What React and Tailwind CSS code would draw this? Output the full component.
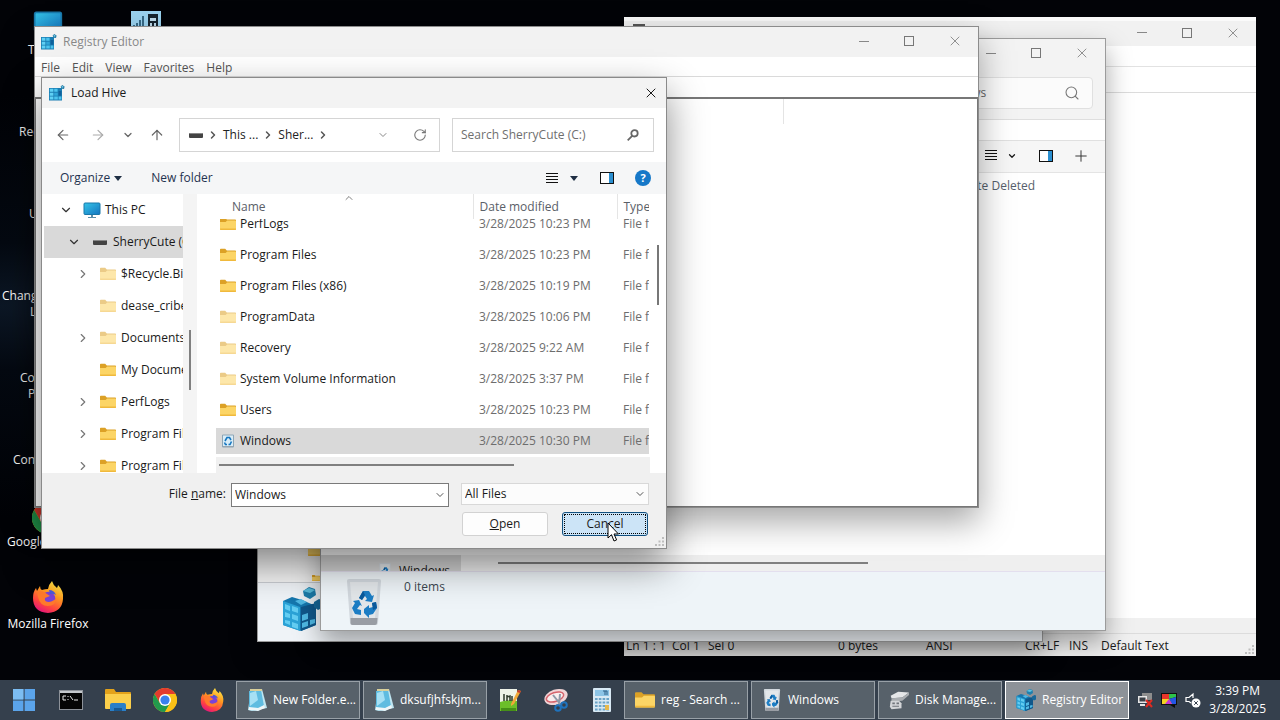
import React from 'react';
import clsx from 'clsx';
import { ArrowLeft, ArrowRight, ArrowUp, ChevronDown, ChevronRight, ChevronUp, Plus, RotateCw, Search, X } from 'lucide-react';

/* ---------- icons ---------- */

function FolderIcon({ className = 'w-4 h-4', faded }) {
  return (
    <svg viewBox="0 0 16 16" className={clsx('shrink-0', className, faded && 'opacity-55')}>
      <path d="M0 2.6q0-.8.8-.8h4.4l1.6 1.6h8.4q.8 0 .8.8V8H0z" fill="#dca126" />
      <path d="M0 6h5.6l1.5-1.4h8.1q.8 0 .8.8v7.8q0 .8-.8.8H.8q-.8 0-.8-.8z" fill="#fcd566" />
      <path d="M0 12.6h16v.6q0 .8-.8.8H.8q-.8 0-.8-.8z" fill="#f0b93c" />
    </svg>
  );
}

function RegistryIcon({ className = 'w-4 h-4' }) {
  return (
    <svg viewBox="0 0 16 16" className={clsx('shrink-0', className)}>
      <path d="M0 3h13v12.500H0z" fill="#1a7db3" />
      <path d="M.8 3.800h3.600v3H.8zM.8 7.700h3.600v3H.8zM.8 11.600h3.600v3H.8z" fill="#5fd0f4" />
      <path d="M5.200 3.800h3.400v3H5.200zM5.200 11.600h3.600v3H5.200zM9.600 11.600h2.800v3H9.600z" fill="#4cc4ee" />
      <path d="M5.200 7.700h3.600v3H5.200z" fill="#2fa5d8" />
      <path d="M9.600 6h2.800v4.700H9.600z" fill="#10609a" />
      <path d="M13.300 0l2.300 1.400-.6 2.500-2.500-.1-.9-2.300z" fill="#2c7fa8" />
      <path d="M13.400 1l1.200.8-1.200.9-1-.9z" fill="#7fd6f2" />
    </svg>
  );
}

function RegistryCube({ className }) {
  return (
    <svg viewBox="0 0 40 44" className={clsx('shrink-0', className)}>
      <path d="M1 14l9-4 10 3 14 6v19l-15 6-18-6z" fill="#1677ae" />
      <path d="M1 14l17 6v24L1 38z" fill="#2ba2d6" />
      <path d="M19 20l15-4v22l-15 6z" fill="#10578a" />
      <path d="M3 17l5 2v5l-5-2zM10 19l6 2v5l-6-2zM3 25l5 2v4l-5-1zM10 27l6 2v5l-6-2zM3 33l5 1v4l-5-2zM10 35l6 2v5l-6-2z" fill="#63cdf2" />
      <path d="M20 28l6-2v6l-6 2zM20 36l6-2v5l-6 2zM28 33l5-1v4l-5 2zM13 14l6-2 6 3-6 3z" fill="#4fb9e4" />
      <path d="M21 4l6-4 6 2 1 6-6 4-6-3z" fill="#1d7fae" />
      <path d="M21 4l6-3 6 2-5 3z" fill="#5bc0e0" />
      <path d="M32 15l5-3 3 1v8l-4 2-4-3z" fill="#17689a" />
    </svg>
  );
}

function RecycleIcon({ className = 'w-4 h-4' }) {
  return (
    <svg viewBox="0 0 36 46" className={clsx('shrink-0', className)}>
      <path d="M1 2q0-2 2-2h30q2 0 2 2l-3 42q0 2-2 2H6q-2 0-2-2z" fill="#d2d8de" />
      <path d="M4 3h28l-3 36H7z" fill="#e3e7ea" />
      <path d="M4.500 39h27l-.5 5q0 2-2 2H6.500q-2 0-2-2z" fill="#999da4" />
      <g fill="#1c7dc4">
        <path d="M13 19l4-7h6l3 5 2-1-2 7-7-1 2-2-2-3-3 4z" />
        <path d="M7 22l6-1 3 6-2-1-3 4 4 1v5l-6-1-3-6 3-5z" />
        <path d="M18 30l5-4v3l4-1-1-4 4-1 1 6-4 6-4 1v3l-5-5z" />
      </g>
      <path d="M17 12l-4 7 3 2 3-5zM26 24l4-1 1 6-4 2z" fill="#0c5a9c" />
    </svg>
  );
}

// Simplified bin for the 16px list size
function SmallRecycleIcon() {
  return (
    <svg viewBox="0 0 16 16" className="h-4 w-4 shrink-0">
      <path d="M2.500 2h11v12h-11z" fill="#d9edf8" stroke="#8ea6b6" />
      <path d="M5 8l2-3.500h2.500L11 7M11.500 8.500L10 11.500H8.500M7 11.500H5.500L4.500 9.500" fill="none" stroke="#1676bf" strokeWidth="1.600" />
      <path d="M3 13h10v1H3z" fill="#9aa5ae" />
    </svg>
  );
}

function MonitorIcon({ className }) {
  return (
    <svg viewBox="0 0 18 16" className={clsx('shrink-0', className)}>
      <defs>
        <linearGradient id="screen" x1="0" y1="0" x2="1" y2="1">
          <stop offset="0" stopColor="#35c4e8" />
          <stop offset="1" stopColor="#1475c0" />
        </linearGradient>
      </defs>
      <rect x="1" y="1" width="16" height="11.500" rx="1" fill="url(#screen)" stroke="#1978aa" />
      <path d="M8 13h2v2h3v1H5v-1h3z" fill="#5b8ea8" />
    </svg>
  );
}

function DriveIcon() {
  return (
    <svg viewBox="0 0 14 5" className="w-3.5 h-[5px] shrink-0">
      <rect width="14" height="5" rx="1" fill="#444" />
      <rect y="0" width="14" height="1" rx="1" fill="#888" />
    </svg>
  );
}

function FirefoxIcon({ className }) {
  return (
    <svg viewBox="0 0 32 32" className={clsx('shrink-0', className)}>
      <defs>
        <linearGradient id="fox" x1=".8" y1="0" x2=".3" y2="1">
          <stop offset="0" stopColor="#fff04a" />
          <stop offset=".4" stopColor="#ff9a20" />
          <stop offset=".75" stopColor="#ff4440" />
          <stop offset="1" stopColor="#e3147c" />
        </linearGradient>
      </defs>
      <path d="M20 0q1 4 5 7 1-2 1-3 6 6 5 14-1 13-15 14Q1 31 1 17q0-6 3-10l1 3 3-5q0 3 2 4 3-1 6-1 1-5 4-8z" fill="url(#fox)" />
      <circle cx="16.500" cy="17.500" r="6.800" fill="#7a42d8" />
      <path d="M5 11q6-2 10 2l3 2-5 2q-1 4 4 4 5-1 7-4 0 8-8 8T6 16z" fill="#ff7a2c" />
      <path d="M17 9q5 0 7 5-3-2-6-1z" fill="#4a59d8" />
    </svg>
  );
}

function ChromeIcon({ className }) {
  return (
    <svg viewBox="0 0 24 24" className={clsx('shrink-0', className)}>
      <circle cx="12" cy="12" r="12" fill="#fbc116" />
      <path d="M1.600 6A12 12 0 0122.400 6H12L6.800 15z" fill="#e33b2e" />
      <path d="M1.600 6A12 12 0 0012 24l5.200-9-10.400 0z" fill="#229a4d" />
      <path d="M22.400 6A12 12 0 0112 24l5.200-9L12 6z" fill="#fbc116" />
      <circle cx="12" cy="12" r="6" fill="#fff" />
      <circle cx="12" cy="12" r="4.600" fill="#3a80ee" />
    </svg>
  );
}

function StartIcon() {
  return (
    <svg viewBox="0 0 22 22" className="w-[22px] h-[22px]">
      <path d="M0 0h10.400v10.400H0zM11.600 0H22v10.400H11.600zM0 11.600h10.400V22H0zM11.600 11.600H22V22H11.600z" fill="#5ba4ea" />
      <path d="M0 0h10.400v10.400H0z" fill="#7cbdf2" />
    </svg>
  );
}

function CmdIcon() {
  return (
    <svg viewBox="0 0 24 20" className="w-6 h-5">
      <rect x=".5" y=".5" width="23" height="19" fill="#050505" stroke="#8d9299" />
      <path d="M1 1h22v2H1z" fill="#c4c8cc" />
      <path d="M7 6H4v4h3M9 6v1M9 9v1M11 6l3 4M15 10h4" stroke="#e8e8e8" fill="none" />
    </svg>
  );
}

function ExplorerIcon() {
  return (
    <svg viewBox="0 0 26 24" className="w-[26px] h-6">
      <path d="M0 2q0-1 1-1h8l2 3h14q1 0 1 1v3H0z" fill="#e3a21a" />
      <path d="M0 6h26v14q0 1-1 1H1q-1 0-1-1z" fill="#fbcf4b" />
      <path d="M5 23v-6q0-2 2-2h12q2 0 2 2v6h-4v-3H9v3z" fill="#2a7fc8" />
      <path d="M9 20h8v3H9z" fill="#185a94" />
    </svg>
  );
}

function NotepadIcon() {
  return (
    <svg viewBox="0 0 20 24" className="w-5 h-6 shrink-0">
      <path d="M4 2l11-1 5 19-15 3-4-1z" fill="#bfe6f2" />
      <path d="M2 3l12-1 3 16-6 5-9-1z" fill="#5fbce0" />
      <path d="M3 5l6-2 2 9-8 6z" fill="#a6e0f4" />
      <path d="M2 19l9 1 6-3 1 3-7 3-9-1z" fill="#eef6f8" />
      <path d="M3 2h12" stroke="#d9cf9a" strokeWidth="2" />
    </svg>
  );
}

function NotepadPlusIcon() {
  return (
    <svg viewBox="0 0 22 24" className="w-[22px] h-6">
      <path d="M1 1h17v22H1z" fill="#eef3e8" />
      <path d="M1 14q9-3 17-1v10H1z" fill="#6cbf2a" />
      <path d="M2 20h15v3H2z" fill="#468f18" />
      <path d="M5 6v7M8 7v6M8 9l3-1v5M13 8v5" stroke="#2e3a2a" strokeWidth="1.500" fill="none" />
      <path d="M12 16l7-14 3 1-7 13-3 2z" fill="#f0a838" />
      <path d="M19 2l3 1-1 2-3-1z" fill="#c33b2b" />
    </svg>
  );
}

function SnippingIcon() {
  return (
    <svg viewBox="0 0 24 24" className="w-6 h-6">
      <ellipse cx="12" cy="9" rx="12" ry="7.500" transform="rotate(-18 12 9)" fill="#f0d4d6" />
      <ellipse cx="11" cy="9" rx="9" ry="4.500" transform="rotate(-18 11 9)" fill="#f8eeee" stroke="#d5636c" strokeWidth="1.500" />
      <path d="M9 7l8 10M16 6l-1 11" stroke="#8e99a8" strokeWidth="2" />
      <circle cx="14" cy="20" r="2.800" fill="none" stroke="#1f72bc" strokeWidth="2" />
      <circle cx="20" cy="17" r="2.800" fill="none" stroke="#1f72bc" strokeWidth="2" />
    </svg>
  );
}

function CalculatorIcon() {
  return (
    <svg viewBox="0 0 18 24" className="w-[18px] h-6">
      <rect width="18" height="24" rx="1" fill="#d8e9f4" />
      <rect x="2" y="2" width="14" height="6" fill="#8cc4e6" />
      <path d="M10 3h4v4M12 3v4" stroke="#2c5f86" fill="none" />
      <path d="M2 11h14M2 14.500h14M2 18h14M2 21.500h14" stroke="#6ba4c8" strokeWidth="2" strokeDasharray="2.600 1.200" />
      <path d="M12 17h4v5h-4z" fill="#e6b84c" />
    </svg>
  );
}

function DiskIcon() {
  return (
    <svg viewBox="0 0 24 22" className="w-5 h-5 shrink-0">
      <path d="M2 6l9-5 13 1-8 6-13 1z" fill="#e4e6e8" />
      <path d="M3 9l13-1 8-6v3l-8 7-13 1z" fill="#a9adb1" />
      <path d="M2 12h10l3 3v6l-12 1-2-3z" fill="#d3d5d8" />
      <path d="M4 14h3v2H4zM9 14h3v2H9zM4 18h8v1H4z" fill="#70757b" />
    </svg>
  );
}

function PaneIcon() {
  return (
    <svg viewBox="0 0 14 12" className="w-3.5 h-3">
      <path d="M0 0h14v12H0z" fill="#111" />
      <path d="M1 1h8v10H1z" fill="#fff" />
      <path d="M9 1h4v10H9z" fill="#2b8fd0" />
    </svg>
  );
}

function ListIcon() {
  return (
    <svg viewBox="0 0 12 11" className="w-3 h-[11px]">
      <path d="M0 .5h12M0 3.500h12M0 6.500h12M0 9.500h12" stroke="#111" shapeRendering="crispEdges" />
    </svg>
  );
}

function SmallSearchIcon() {
  return (
    <svg viewBox="0 0 12 12" className="h-3 w-3" fill="none" stroke="#666" strokeWidth="1.800">
      <circle cx="7.500" cy="4.300" r="3.200" />
      <path d="M5.200 6.800L.7 11.300" />
    </svg>
  );
}

function Caret() {
  return (
    <svg viewBox="0 0 8 5" className="w-2 h-[5px]">
      <path d="M0 0h8L4 5z" fill="#1f2f44" />
    </svg>
  );
}

function Grip({ className }) {
  return (
    <svg viewBox="0 0 9 9" className={clsx('w-[9px] h-[9px]', className)}>
      <path d="M7 0h2v2H7zM7 3.500h2v2H7zM3.500 3.500h2v2h-2zM7 7h2v2H7zM3.500 7h2v2h-2zM0 7h2v2H0z" fill="#bdbdbd" />
    </svg>
  );
}

/* ---------- window chrome ---------- */

function WindowControls() {
  return (
    <div className="ml-auto flex pb-0.5 text-[#777]">
      <button aria-label="Minimize" className="flex w-[46px] items-center justify-center">
        <span className="h-px w-2.5 bg-[#888]" />
      </button>
      <button aria-label="Maximize" className="flex w-11 items-center justify-center">
        <span className="h-2.5 w-2.5 border border-[#777]" />
      </button>
      <button aria-label="Close" className="flex w-[47px] items-center justify-center">
        <X className="h-4 w-4" strokeWidth={1.2} />
      </button>
    </div>
  );
}

/* ---------- background windows ---------- */

function EditorWindow() {
  return (
    <section className="absolute left-[624px] top-[17px] flex h-[639px] w-[632px] flex-col bg-white">
      <header className="flex h-[29px] shrink-0 border-t-4 border-[#fafafa] bg-[#f1f1f1]">
        <span className="ml-[9px] mt-[3px] h-1 w-3 bg-[#555]" />
        <WindowControls />
      </header>
      <div className="h-[21px] shrink-0 border-b border-[#e2e2e2]" />
      <div className="h-[26px] shrink-0 border-b border-[#dcdcdc]" />
      <div className="flex-1" />
      <div className="h-4 shrink-0 border-b border-[#dcdcdc] bg-[#f0f0f0]" />
      <footer className="flex h-[22px] shrink-0 items-center bg-[#f0f0f0] pl-0.5 pt-0.5 text-[#1a1a1a]">
        <span className="w-[46px]">Ln 1 : 1</span>
        <span className="w-9">Col 1</span>
        <span className="w-[130px]">Sel 0</span>
        <span className="w-[88px]">0 bytes</span>
        <span className="w-[99px]">ANSI</span>
        <span className="w-11">CR+LF</span>
        <span className="w-8">INS</span>
        <span>Default Text</span>
        <Grip className="mb-0.5 ml-auto mr-0.5 self-end" />
      </footer>
    </section>
  );
}

function SearchWindow() {
  return (
    <section className="absolute left-[257px] top-[52px] flex h-[590px] w-[786px] flex-col border border-[#9a9a9a] bg-[#f5f5f5] [box-shadow:0_12px_24px_rgba(0,0,0,0.35)]">
      <div className="flex flex-1 flex-col justify-end gap-4 pl-[50px]">
        <FolderIcon />
        <FolderIcon className="h-2 w-4" />
      </div>
      <footer className="flex h-[59px] shrink-0 border-t border-[#c9cdd2] bg-[#eff3f7] pl-6 pt-1">
        <RegistryCube className="h-11 w-10" />
      </footer>
    </section>
  );
}

function RecycleWindow() {
  return (
    <section className="absolute left-[320px] top-[38px] flex h-[593px] w-[786px] flex-col border border-[#9b9b9b] bg-white [box-shadow:0_12px_24px_rgba(0,0,0,0.35)]">
      <header className="flex h-[30px] shrink-0 bg-[#f3f3f3]">
        <WindowControls />
      </header>
      <div className="flex h-[51px] shrink-0 justify-end border-b border-[#dedede] bg-[#f3f3f3] pr-3 pt-2">
        <label className="flex h-8 w-[208px] items-center rounded border border-[#e0e0e0] bg-[#fbfbfb] pl-2 pr-3">
          <input
            aria-label="Search Windows"
            placeholder="Search Windows"
            className="min-w-0 flex-1 bg-transparent outline-none placeholder:text-[#666]"
          />
          <Search className="h-4 w-4 text-[#777]" strokeWidth={1.6} />
        </label>
      </div>
      <div className="h-[21px] shrink-0 border-b border-[#e0e0e0]" />
      <div className="flex h-8 shrink-0 items-center justify-end border-b border-[#e4e4e4] bg-[#f6f6f6] pb-0.5 pr-[15px]">
        <button aria-label="View" className="flex items-center gap-2.5">
          <ListIcon />
          <ChevronDown className="h-2.5 w-2.5" strokeWidth={3} />
        </button>
        <button aria-label="Preview pane" className="ml-[22px]">
          <PaneIcon />
        </button>
        <button aria-label="More" className="ml-[19px]">
          <Plus className="h-[18px] w-[18px] text-[#333]" strokeWidth={1.3} />
        </button>
      </div>
      <div className="flex h-[25px] shrink-0 items-center justify-end pr-[70px] text-[#56606c]">Date Deleted</div>
      <div className="flex-1" />
      <div className="flex h-4 shrink-0 bg-[#efefef]">
        <div className="flex w-[140px] items-start overflow-hidden bg-[#d3d3d3] pl-14 pt-2">
          <RecycleIcon className="mr-1.5 h-4 w-4" />
          Windows
        </div>
        <div className="ml-[37px] mt-[7px] h-0.5 w-[370px] bg-[#808080]" />
      </div>
      <footer className="flex h-[59px] shrink-0 border-t border-[#e3dfee] bg-[#eef4f8] pl-[25px] pt-[7px]">
        <RecycleIcon className="h-[46px] w-9" />
        <span className="ml-[22px] text-[#3c4650]">0 items</span>
      </footer>
    </section>
  );
}

function RegistryEditor() {
  const menus = ['File', 'Edit', 'View', 'Favorites', 'Help'];

  return (
    <section className="absolute left-[34px] top-[26px] flex h-[482px] w-[945px] flex-col border border-[#8c8c8c] bg-white [box-shadow:0_14px_32px_rgba(0,0,0,0.35)]">
      <header className="flex h-[30px] shrink-0 bg-[#f2f2f2]">
        <h2 className="flex items-center gap-1.5 pl-1.5 text-[#888]">
          <RegistryIcon />
          Registry Editor
        </h2>
        <WindowControls />
      </header>
      <nav className="flex h-5 shrink-0 items-center gap-3 border-b border-[#dadada] pl-1.5 pt-0.5 text-[#555]">
        {menus.map((menu) => (
          <button key={menu}>{menu}</button>
        ))}
      </nav>
      <div className="h-5 shrink-0" />
      <div className="flex flex-1 border border-t-2 border-[#777]">
        <div className="ml-[747px] h-[25px] border-l border-[#e4e4e4]" />
      </div>
    </section>
  );
}

/* ---------- Load Hive dialog ---------- */

const TREE = [
  { name: '$Recycle.Bin', expandable: true, faded: true },
  { name: 'dease_cribe', faded: true },
  { name: 'Documents', expandable: true, faded: true },
  { name: 'My Documents' },
  { name: 'PerfLogs', expandable: true },
  { name: 'Program Files', expandable: true },
  { name: 'Program Files (x86)', expandable: true },
];

const FILES = [
  { name: 'PerfLogs', date: '3/28/2025 10:23 PM' },
  { name: 'Program Files', date: '3/28/2025 10:23 PM' },
  { name: 'Program Files (x86)', date: '3/28/2025 10:19 PM' },
  { name: 'ProgramData', date: '3/28/2025 10:06 PM', faded: true },
  { name: 'Recovery', date: '3/28/2025 9:22 AM', faded: true },
  { name: 'System Volume Information', date: '3/28/2025 3:37 PM', faded: true },
  { name: 'Users', date: '3/28/2025 10:23 PM' },
  { name: 'Windows', date: '3/28/2025 10:30 PM', selected: true },
];

function FolderTree() {
  return (
    <div className="flex w-[155px] shrink-0 bg-[#f4f4f4]">
      <ul className="w-[141px] overflow-hidden whitespace-nowrap bg-white pl-0.5">
        <li className="flex h-8 items-center pl-[15px]">
          <ChevronDown className="h-3.5 w-3.5 text-[#333]" />
          <MonitorIcon className="ml-2.5 mr-1 h-4 w-[18px]" />
          This PC
        </li>
        <li className="flex h-8 items-center bg-[#d9d9d9] pl-[23px]">
          <ChevronDown className="mr-3 h-3.5 w-3.5 shrink-0 text-[#333]" />
          <DriveIcon />
          <span className="ml-1.5">SherryCute (C:)</span>
        </li>
        {TREE.map((node) => (
          <li key={node.name} className="flex h-8 items-center pl-8">
            <ChevronRight className={clsx('mr-2.5 h-3.5 w-3.5 shrink-0 text-[#777]', !node.expandable && 'invisible')} />
            <FolderIcon faded={node.faded} />
            <span className="ml-[5px]">{node.name}</span>
          </li>
        ))}
      </ul>
      <div className="ml-1.5 mt-[136px] h-[60px] w-0.5 bg-[#808080]" />
    </div>
  );
}

function Cell({ clipped, selected, className = 'pl-1.5', children }) {
  return (
    <div className={clsx('flex items-end overflow-hidden', clipped ? 'h-5' : 'h-[31px]')}>
      <div className="flex h-[31px] w-full shrink-0 items-center whitespace-nowrap">
        <div className={clsx('flex h-[26px] w-full items-center', className, selected && 'bg-[#d9d9d9]')}>{children}</div>
      </div>
    </div>
  );
}

function FileList() {
  return (
    <div className="flex min-w-0 flex-1 flex-col pl-[19px]">
      <div className="flex flex-1">
        <div className="relative min-w-0 flex-1 overflow-hidden">
          <ChevronUp className="absolute -top-0.5 left-[127px] h-3 w-3 text-[#555]" strokeWidth={1.5} />
          <table className="w-full table-fixed border-collapse text-left">
            <thead>
              <tr className="h-[25px] text-[#5a6068]">
                <th className="border-r border-[#e5e5e5] pl-4 font-normal">Name</th>
                <th className="w-36 border-r border-[#e5e5e5] pl-1.5 font-normal">Date modified</th>
                <th className="w-8 pl-1.5 font-normal">Type</th>
              </tr>
            </thead>
            <tbody>
              {FILES.map((file, i) => (
                <tr key={file.name}>
                  <td>
                    <Cell clipped={i === 0} selected={file.selected} className="pl-1">
                      {file.selected ? <SmallRecycleIcon /> : <FolderIcon faded={file.faded} />}
                      <span className="ml-1">{file.name}</span>
                    </Cell>
                  </td>
                  <td className="text-[#6d6d6d]">
                    <Cell clipped={i === 0} selected={file.selected}>{file.date}</Cell>
                  </td>
                  <td className="text-[#6d6d6d]">
                    <Cell clipped={i === 0} selected={file.selected}>File folder</Cell>
                  </td>
                </tr>
              ))}
            </tbody>
          </table>
        </div>
        <div className="flex w-[17px] pl-2 pt-[51px]">
          <div className="h-[60px] w-0.5 bg-[#777]" />
        </div>
      </div>
      <div className="mr-4 flex h-4 shrink-0 items-center bg-[#f0f0f0] pl-[3px]">
        <div className="h-0.5 w-[295px] bg-[#808080]" />
      </div>
    </div>
  );
}

function LoadHiveDialog() {
  return (
    <section className="absolute left-[41px] top-[77px] flex w-[626px] flex-col border border-[#8a8a8a] bg-white [box-shadow:0_16px_36px_rgba(0,0,0,0.45)]">
      <header className="flex h-[30px] shrink-0 items-center bg-[#f3f3f3] pl-[7px] pr-[7px]">
        <RegistryIcon />
        <h2 className="ml-1.5">Load Hive</h2>
        <button aria-label="Close" className="ml-auto">
          <X className="h-4 w-4" strokeWidth={1.5} />
        </button>
      </header>

      <div className="flex h-[54px] items-center pl-[13px] pr-3 text-[#666]">
        <button aria-label="Back"><ArrowLeft className="h-4 w-4" strokeWidth={1.8} /></button>
        <button aria-label="Forward" className="ml-[19px]"><ArrowRight className="h-4 w-4 text-[#aaa]" strokeWidth={1.8} /></button>
        <button aria-label="Recent locations" className="ml-4"><ChevronDown className="h-3 w-3" strokeWidth={2.5} /></button>
        <button aria-label="Up" className="ml-[15px]"><ArrowUp className="h-4 w-4" strokeWidth={1.8} /></button>
        <div className="ml-3.5 flex h-[34px] flex-1 items-center border border-[#d5d5d5] pl-[9px] pr-3 text-[#222]">
          <DriveIcon />
          <ChevronRight className="mx-1 h-3 w-3 text-[#555]" strokeWidth={3} />
          <button>This ...</button>
          <ChevronRight className="mx-1 h-3 w-3 text-[#555]" strokeWidth={3} />
          <button>Sher...</button>
          <ChevronRight className="mx-1 h-3 w-3 text-[#555]" strokeWidth={3} />
          <button aria-label="Previous locations" className="ml-auto"><ChevronDown className="h-3 w-3 text-[#888]" /></button>
          <button aria-label="Refresh" className="ml-6"><RotateCw className="h-3.5 w-3.5 text-[#777]" strokeWidth={1.9} /></button>
        </div>
        <label className="ml-3 flex h-[34px] w-[202px] items-center border border-[#d5d5d5] pl-2 pr-3.5">
          <input
            aria-label="Search SherryCute (C:)"
            placeholder="Search SherryCute (C:)"
            className="min-w-0 flex-1 outline-none placeholder:text-[#6f6f6f]"
          />
          <SmallSearchIcon />
        </label>
      </div>

      <div className="flex h-8 items-center bg-[#f5f6f7] pl-[18px] pr-[15px] text-[#1f3350]">
        <button className="flex items-center gap-1">Organize <Caret /></button>
        <button className="ml-[29px]">New folder</button>
        <button aria-label="Change view" className="ml-auto"><ListIcon /></button>
        <button aria-label="More views" className="ml-3"><Caret /></button>
        <button aria-label="Preview pane" className="ml-[22px]"><PaneIcon /></button>
        <button aria-label="Help" className="ml-[21px] h-4 w-4 rounded-full bg-[#1678c8] text-[11px] font-bold leading-4 text-white">?</button>
      </div>

      <div className="flex h-[279px]">
        <FolderTree />
        <FileList />
      </div>

      <footer className="relative bg-[#f0f0f0] pb-3 pl-4 pr-[17px] pt-2.5">
        <div className="flex items-start justify-end">
          <label htmlFor="file-name" className="mr-[5px] mt-[3px]">
            File <u>n</u>ame:
          </label>
          <div className="flex h-6 w-[218px] items-center border border-[#7a7a7a] bg-white pl-[3px] pr-0.5">
            <input id="file-name" defaultValue="Windows" className="min-w-0 flex-1 outline-none" />
            <ChevronDown className="h-3 w-3 text-[#555]" strokeWidth={2} />
          </div>
          <div className="relative ml-3 w-[188px]">
            <select aria-label="File type" className="h-[22px] w-full appearance-none border border-[#d8d8d8] bg-[#fcfcfc] pl-[3px] outline-none">
              <option>All Files</option>
            </select>
            <ChevronDown className="pointer-events-none absolute right-[3px] top-[5px] h-3 w-3 text-[#555]" strokeWidth={2} />
          </div>
        </div>
        <div className="mr-px mt-[5px] flex justify-end gap-3.5">
          <button className="h-6 w-[86px] rounded-[3px] border border-[#d2d2d2] bg-[#fdfdfd]">
            <u>O</u>pen
          </button>
          <button className="h-6 w-[86px] rounded-[3px] border border-[#12507f] bg-[#cce4f7] outline-1 -outline-offset-3 outline-dotted outline-black">
            Cancel
          </button>
        </div>
        <Grip className="absolute bottom-0.5 right-0.5" />
      </footer>
    </section>
  );
}

/* ---------- desktop ---------- */

// Most labels run behind the registry window, so only their first letters show
function DesktopIcons() {
  return (
    <div className="absolute left-0 top-[10px] w-24 text-white">
      <div className="h-[82px]">
        <MonitorIcon className="ml-[33px] h-7 w-[30px]" />
        <p className="pl-7 pt-1">This PC</p>
      </div>
      <p className="h-[82px] pl-[19px] pt-8">Recycle Bin</p>
      <p className="h-[82px] pl-[29px] pt-8">U</p>
      <div className="h-[82px] pl-0.5 pt-8">
        <p>Chang</p>
        <p className="pl-7">L</p>
      </div>
      <div className="h-[82px] pl-5 pt-8">
        <p>Co</p>
        <p className="pl-2">P</p>
      </div>
      <p className="h-[82px] pl-[13px] pt-8">Con</p>
      <div className="h-[79px]">
        <ChromeIcon className="ml-8 h-8 w-8" />
        <p className="pl-[7px]">Google Chrome</p>
      </div>
      <div className="flex flex-col items-center gap-[3px]">
        <FirefoxIcon className="h-8 w-8" />
        <p className="whitespace-nowrap">Mozilla Firefox</p>
      </div>
    </div>
  );
}

function NetworkMonitorIcon() {
  return (
    <svg viewBox="0 0 30 30" className="absolute left-[131px] top-[11px] h-[30px] w-[30px]">
      <rect width="30" height="30" fill="#9bd3f0" />
      <path d="M3 16v-2M6 16v-4M9 16V9M12 16V5" stroke="#174763" strokeWidth="1.500" />
      <path d="M17 3h10v13H17z" fill="#16242f" />
      <path d="M19 7h6v3h-6zM19 12h2v3h-2zM23 12h2v3h-2z" fill="#bfdcec" />
    </svg>
  );
}

function Cursor() {
  return (
    <svg viewBox="0 0 12 20" className="absolute left-[607px] top-[522px] h-5 w-3">
      <path d="M1 1v15l3.500-3.300L7 19l2.600-1.100L7 12h4.500z" fill="#fff" stroke="#000" />
    </svg>
  );
}

/* ---------- taskbar ---------- */

function Launcher({ label, className = 'w-[47px]', children }) {
  return (
    <button aria-label={label} className={clsx('flex h-full items-center justify-center', className)}>
      {children}
    </button>
  );
}

function TaskButton({ icon, active, children }) {
  return (
    <button
      className={clsx(
        'flex h-[38px] w-[124px] items-center gap-1.5 whitespace-nowrap border pl-2.5',
        active ? 'border-white bg-[#8d9298]' : 'border-[#98a0a7] bg-[#57616a]'
      )}
    >
      {icon}
      {children}
    </button>
  );
}

function Taskbar() {
  return (
    <footer className="relative flex h-10 shrink-0 items-center bg-[#35404d] text-white">
      <Launcher label="Start"><StartIcon /></Launcher>
      <Launcher label="Command Prompt"><CmdIcon /></Launcher>
      <Launcher label="File Explorer"><ExplorerIcon /></Launcher>
      <Launcher label="Google Chrome"><ChromeIcon className="h-6 w-6" /></Launcher>
      <Launcher label="Mozilla Firefox"><FirefoxIcon className="h-6 w-6" /></Launcher>
      <div className="ml-px flex gap-[3px]">
        <TaskButton icon={<NotepadIcon />}>New Folder.e...</TaskButton>
        <TaskButton icon={<NotepadIcon />}>dksufjhfskjm...</TaskButton>
      </div>
      <Launcher label="Notepad++" className="w-[46px]"><NotepadPlusIcon /></Launcher>
      <Launcher label="Snipping Tool" className="w-[46px]"><SnippingIcon /></Launcher>
      <Launcher label="Calculator" className="w-[45px]"><CalculatorIcon /></Launcher>
      <div className="flex gap-[3px]">
        <TaskButton icon={<FolderIcon className="h-5 w-5" />}>reg - Search ...</TaskButton>
        <TaskButton icon={<RecycleIcon className="h-[22px] w-5" />}>Windows</TaskButton>
        <TaskButton icon={<DiskIcon />}>Disk Manage...</TaskButton>
        <TaskButton active icon={<RegistryCube className="h-6 w-5" />}>Registry Editor</TaskButton>
      </div>
      <div className="ml-auto flex items-center gap-2 pr-3.5">
        <svg viewBox="0 0 16 16" className="h-4 w-4">
          <path d="M5 1h10v7H5z" fill="#8d8d8d" />
          <path d="M1 4h9v7H1zM3 12h5v2H3z" fill="#e6e6e6" />
          <path d="M2.500 5.500h6v4h-6z" fill="#3a3f46" />
          <path d="M9 8l6 7M15 8l-6 7" stroke="#e02a20" strokeWidth="2" />
        </svg>
        <svg viewBox="0 0 16 16" className="h-4 w-4">
          <path d="M0 1h16v12H0z" fill="#111" />
          <path d="M1 2h7v5H1z" fill="#e8352c" />
          <path d="M8 2h7v3L8 7z" fill="#2fc34a" />
          <path d="M8 7l7-2v7h-4z" fill="#2456e6" />
          <path d="M1 7h7l3 5H1z" fill="#f4d321" />
          <path d="M4 12l4-5 3 5z" fill="#c837d6" />
          <path d="M9 13h5v3z" fill="#0a0a0a" />
        </svg>
        <svg viewBox="0 0 16 16" className="h-4 w-4">
          <path d="M6 11L4 9.500H1v-4h3L8 2v4" fill="none" stroke="#fff" strokeWidth="1.200" />
          <circle cx="11" cy="11" r="4.500" fill="#fff" />
          <path d="M9.200 9.200l3.600 3.600M12.800 9.200l-3.600 3.600" stroke="#35404d" />
        </svg>
        <time className="text-center leading-[18px]">
          3:39 PM
          <br />
          3/28/2025
        </time>
      </div>
    </footer>
  );
}

export default function App() {
  return (
    <div className="flex h-screen w-full flex-col overflow-hidden bg-[#020307] font-['Open_Sans','Noto_Sans',sans-serif] text-[12px] leading-4 text-[#1a1a1a]">
      <main className="relative flex-1 overflow-hidden bg-[radial-gradient(ellipse_at_0%_45%,#0d1826_0%,#050a12_12%,#020307_40%)]">
        <DesktopIcons />
        <NetworkMonitorIcon />
        <EditorWindow />
        <SearchWindow />
        <RecycleWindow />
        <RegistryEditor />
        <LoadHiveDialog />
        <Cursor />
      </main>
      <Taskbar />
    </div>
  );
}
